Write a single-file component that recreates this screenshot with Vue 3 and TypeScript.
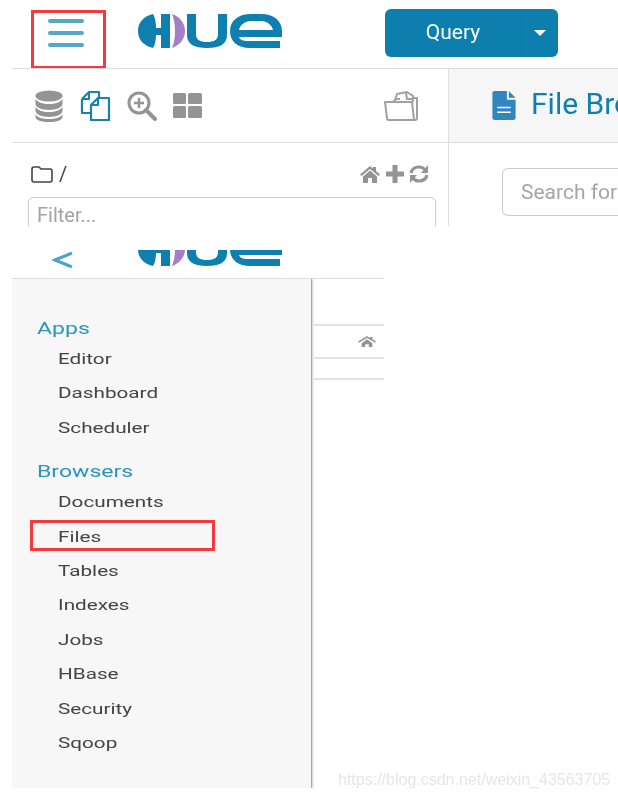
<script setup lang="ts">
const appsItems: string[] = ['Editor', 'Dashboard', 'Scheduler']
const browserItems: string[] = ['Documents', 'Files', 'Tables', 'Indexes', 'Jobs', 'HBase', 'Security', 'Sqoop']
</script>

<template>
  <div class="page">
    <section class="top">
      <header class="navbar">
        <div class="burger">
          <span></span><span></span><span></span>
        </div>
        <svg class="logo" width="146" height="36" viewBox="0 0 146 36">
          <path d="M15 1C6 3 0 9 0 18s6 15 15 17c2-3 3-8 3-13h5v13h9V1h-9v14h-5c0-5-1-11-3-14z" fill="#0e7fae" />
          <path d="M34 1c8 3 13 9 13 17s-5 14-13 17c2-5 3-10 3-17s-1-12-3-17z" fill="#a27fc6" />
          <path d="M49 1h9v20c0 6 4 8 11 8s11-2 11-8V1h9v21c0 9-7 13-20 13s-20-4-20-13z" fill="#0e7fae" />
          <path fill-rule="evenodd" d="M92 18C92 7 101 1 113 1h10c13 0 21 7 21 17v6H101c1 3 4 4 9 4h32v7h-30C99 35 92 28 92 18zm9-1h34c-1-5-6-9-12-9h-10c-6 0-11 4-12 9z" fill="#0e7fae" />
        </svg>
        <div class="query-btn">
          <span class="query-label">Query</span>
          <span class="query-caret"><i></i></span>
        </div>
      </header>
      <div class="panels">
        <aside class="left">
          <div class="assist-tabs">
            <svg class="t-db" width="28" height="32" viewBox="0 0 28 32" fill="#949494">
              <ellipse cx="14" cy="6" rx="13.500" ry="5.500" />
              <path d="M.5 9c2 3 7 5 13.500 5s11.500-2 13.500-5v5c0 3-6 6-13.500 6S.5 17 .5 14z" />
              <path d="M.5 17c2 3 7 5 13.500 5s11.500-2 13.500-5v4c0 3-6 6-13.500 6S.5 24 .5 21z" />
              <path d="M.5 24.500c2 3 7 4.500 13.500 4.500s11.500-1.500 13.500-4.500V27c0 3-6 5-13.500 5S.5 30 .5 27z" />
            </svg>
            <svg class="t-files" width="31" height="31" viewBox="0 0 31 31" fill="none" stroke="#1b80ad" stroke-width="2.200" stroke-linejoin="round">
              <path d="M2 9 9 2h10v7M2 9v14h8M2 9h7V2" />
              <path d="M11 15l7-7h11v22H11z" fill="#fff" />
              <path d="M11 15h7V8" />
            </svg>
            <svg class="t-search" width="30" height="30" viewBox="0 0 30 30" fill="none" stroke="#949494">
              <circle cx="12" cy="12" r="10" stroke-width="3" />
              <path d="M19 19l9 9" stroke-width="4" stroke-linecap="round" />
              <path d="M7 12h10M12 7v10" stroke-width="2.500" />
            </svg>
            <svg class="t-grid" width="29" height="25" viewBox="0 0 29 25" fill="#949494">
              <rect width="13" height="11" rx="1.500" />
              <rect x="15" width="14" height="11" rx="1.500" />
              <rect y="13" width="13" height="12" rx="1.500" />
              <rect x="15" y="13" width="14" height="12" rx="1.500" />
            </svg>
            <svg class="t-open" width="34" height="30" viewBox="0 0 34 30" fill="none" stroke="#a0a0a0" stroke-width="2" stroke-linejoin="round">
              <path d="M3 27 1 11h8l3-3h4" />
              <path d="M11 9 13 3l10-2 6 4v6" />
              <path d="M22 2l1 6h6" />
              <path d="M29 7h4v20c0 1-1 2-2 2H5c-1 0-2-1-2-2" />
              <path d="M1 11h27l2 18" />
            </svg>
          </div>
          <div class="assist-body">
            <div class="path-row">
              <svg class="i-folder" width="22" height="17" viewBox="0 0 22 17" fill="none" stroke="#444" stroke-width="1.600">
                <path d="M3 1h5l2 2h9c1 0 2 1 2 2v9c0 1-1 2-2 2H3c-1 0-2-1-2-2V3c0-1 1-2 2-2z" />
              </svg>
              <span class="slash">/</span>
              <span class="spacer"></span>
              <svg class="i-home" width="20" height="17" viewBox="0 0 20 17" fill="#949494">
                <path d="M10 0 0 8.500l1.500 1.500L10 3l8.500 7L20 8.500l-4-3.500V1h-3v1.500z" />
                <path d="M3 10.500 10 4.500l7 6V17h-5v-5H8v5H3z" />
              </svg>
              <svg class="i-plus" width="18" height="18" viewBox="0 0 18 18" fill="#949494">
                <path d="M6.500 0h5v6.500H18v5h-6.500V18h-5v-6.500H0v-5h6.500z" />
              </svg>
              <svg class="i-sync" width="20" height="20" viewBox="0 0 20 20" fill="none" stroke="#949494" stroke-width="3.200">
                <path d="M2 9c1-4 4-6 8-6 3 0 5 1 7 4" />
                <path d="M18 11c-1 4-4 6-8 6-3 0-5-1-7-4" />
                <path d="M19 1v8h-7zM1 19v-8h7z" fill="#949494" stroke="none" />
              </svg>
            </div>
            <div class="filter">Filter...</div>
          </div>
        </aside>
        <main class="right">
          <div class="title-bar">
            <svg class="doc-icon" width="24" height="29" viewBox="0 0 24 30">
              <path d="M2 0h13v9h9v19c0 1-1 2-2 2H2c-1 0-2-1-2-2V2C0 1 1 0 2 0zM17 0l7 7h-7z" fill="#3186c0" />
              <path d="M5 17h14M5 22h14" stroke="#fff" stroke-width="1.500" />
            </svg>
            <span class="title">File Browser</span>
          </div>
          <div class="search-wrap">
            <div class="search">Search for file name</div>
          </div>
        </main>
      </div>
    </section>

    <section class="bottom">
      <div class="nav2">
        <svg class="back" width="21" height="16" viewBox="0 0 21 16" fill="none" stroke="#4ba3c7" stroke-width="3">
          <path d="M20 1 3 8l17 7" />
        </svg>
        <div class="logo-crop">
          <svg class="logo" width="146" height="36" viewBox="0 0 146 36">
            <path d="M15 1C6 3 0 9 0 18s6 15 15 17c2-3 3-8 3-13h5v13h9V1h-9v14h-5c0-5-1-11-3-14z" fill="#0e7fae" />
            <path d="M34 1c8 3 13 9 13 17s-5 14-13 17c2-5 3-10 3-17s-1-12-3-17z" fill="#a27fc6" />
            <path d="M49 1h9v20c0 6 4 8 11 8s11-2 11-8V1h9v21c0 9-7 13-20 13s-20-4-20-13z" fill="#0e7fae" />
            <path fill-rule="evenodd" d="M92 18C92 7 101 1 113 1h10c13 0 21 7 21 17v6H101c1 3 4 4 9 4h32v7h-30C99 35 92 28 92 18zm9-1h34c-1-5-6-9-12-9h-10c-6 0-11 4-12 9z" fill="#0e7fae" />
          </svg>
        </div>
      </div>
      <div class="under">
        <nav class="sidebar">
          <h4 class="group first">Apps</h4>
          <div v-for="item in appsItems" :key="item" class="item"><span>{{ item }}</span></div>
          <h4 class="group second">Browsers</h4>
          <div v-for="item in browserItems" :key="item" class="item" :class="{ marked: item === 'Files' }"><span>{{ item }}</span></div>
        </nav>
        <div class="behind">
          <div class="behind-row">
            <svg width="18" height="11" viewBox="0 0 20 12" fill="#949494">
              <path d="M10 0 0 6l1 1.500 9-5.500 9 5.500L20 6l-4-2.500V1h-3v1z" />
              <path d="M4 8l6-4.500L16 8v4h-4V9H8v3H4z" />
            </svg>
          </div>
          <div class="behind-empty"></div>
          <div class="watermark">https://blog.csdn.net/weixin_43563705</div>
        </div>
      </div>
    </section>
  </div>
</template>

<style>
html, body { margin: 0; background: #fff; }
</style>

<style scoped>
.page {
  width: 618px;
  height: 798px;
  overflow: hidden;
  background: #fff;
  font-family: Roboto, "Liberation Sans", sans-serif;
  padding-left: 12px;
  box-sizing: border-box;
  filter: blur(0.4px);
}
.top { height: 226px; overflow: hidden; }
.navbar {
  height: 68px;
  border-bottom: 1px solid #dcdcdc;
  display: flex;
  align-items: flex-start;
}
.burger {
  margin: 10px 0 0 19px;
  width: 75px;
  height: 58px;
  box-sizing: border-box;
  border: 3px solid #f33a3f;
  border-bottom-width: 2px;
  padding: 6px 0 0 14px;
  display: flex;
  flex-direction: column;
  gap: 8px;
}
.burger span {
  display: block;
  width: 36px;
  height: 4px;
  border-radius: 2px;
  background: #56a7c9;
}
.logo { display: block; flex: none; }
.navbar > .logo { margin: 13px 0 0 32px; }
.query-btn {
  margin: 9px 0 0 101px;
  width: 173px;
  height: 48px;
  border-radius: 6px;
  background: #0d7fae;
  display: flex;
  color: #fff;
}
.query-label {
  width: 136px;
  border-right: 1px solid #2b6f95;
  text-align: center;
  line-height: 47px;
  font-size: 21px;
}
.query-caret { flex: 1; display: flex; align-items: center; justify-content: center; }
.query-caret i {
  width: 0;
  height: 0;
  border: 6px solid transparent;
  border-top-color: #fff;
  border-bottom-width: 0;
}
.panels { display: flex; height: 157px; }
.left { width: 436px; flex: none; border-right: 1px solid #dedede; }
.assist-tabs {
  height: 73px;
  border-bottom: 1px solid #dedede;
  display: flex;
  align-items: center;
  padding: 0 30px 0 23px;
}
.t-db { flex: none; }
.t-files { margin-left: 17px; flex: none; }
.t-search { margin-left: 16px; flex: none; }
.t-grid { margin-left: 16px; margin-top: -1px; flex: none; }
.t-open { margin-left: auto; flex: none; }
.assist-body { padding: 21px 0 0 16px; }
.path-row { display: flex; align-items: center; height: 20px; padding: 0 19px 0 3px; }
.i-folder, .i-home, .i-plus, .i-sync { flex: none; }
.slash { margin-left: 6px; font-size: 20px; color: #444; }
.spacer { flex: 1; }
.i-home { margin-right: -2px; transform: translateX(-3px); }
.i-plus { margin-left: 5px; }
.i-sync { margin-left: 5px; }
.filter {
  margin: 13px 0 0 0;
  width: 408px;
  height: 40px;
  box-sizing: border-box;
  border: 1px solid #ccc;
  border-radius: 5px;
  padding: 3px 8px;
  font-size: 20px;
  line-height: 28px;
  color: #a2a2a2;
}
.right { flex: 1; min-width: 0; overflow: hidden; }
.title-bar {
  height: 73px;
  background: #f6f6f6;
  border-bottom: 1px solid #dedede;
  display: flex;
  align-items: center;
  padding-left: 43px;
  white-space: nowrap;
}
.doc-icon { flex: none; }
.title { margin: -4px 0 0 15px; font-size: 30px; color: #0f7fae; }
.search-wrap { padding: 25px 0 0 53px; }
.search {
  width: 200px;
  height: 48px;
  box-sizing: border-box;
  border: 1px solid #ccc;
  border-right: 0;
  border-radius: 6px 0 0 6px;
  padding-left: 18px;
  font-size: 21px;
  line-height: 46px;
  color: #a5a5a5;
  white-space: nowrap;
}
.bottom { height: 572px; }
.nav2 {
  height: 52px;
  width: 372px;
  border-bottom: 1px solid #dcdcdc;
  display: flex;
  align-items: flex-start;
  overflow: hidden;
}
.back { margin: 26px 0 0 40px; flex: none; }
.logo-crop { margin: 24px 0 0 65px; height: 17px; overflow: hidden; width: 146px; flex: none; }
.logo-crop .logo { margin-top: -19px; }
.under { display: flex; align-items: flex-start; }
.sidebar {
  width: 300px;
  height: 509px;
  box-sizing: border-box;
  background: #f7f7f7;
  border-right: 1px solid #a8a8a8;
  box-shadow: 1px 0 2px rgba(0, 0, 0, 0.2);
  clip-path: inset(0 -4px 0 0);
  padding: 40px 0 0 25px;
}
.group {
  margin: 0;
  font-size: 16px;
  font-weight: 400;
  line-height: 20px;
  color: #2b93c0;
  transform: scaleX(1.44);
  transform-origin: left center;
  white-space: nowrap;
}
.group.first { margin-bottom: 6px; }
.group.second { margin-top: 14px; margin-bottom: 6px; }
.item {
  height: 34.400px;
  line-height: 29px;
  padding-left: 21px;
  font-size: 15px;
  color: #444;
  position: relative;
}
.item span {
  display: inline-block;
  transform: scaleX(1.38);
  transform-origin: left center;
  white-space: nowrap;
}
.item.marked::after {
  content: "";
  position: absolute;
  left: -7px;
  top: -3px;
  width: 185px;
  height: 31px;
  box-sizing: border-box;
  border: 3px solid #f33a3f;
}
.behind { width: 72px; position: relative; }
.behind-row {
  margin-top: 45px;
  height: 31px;
  border-top: 2px solid #e4e4e4;
  border-bottom: 2px solid #e4e4e4;
  display: flex;
  align-items: center;
  justify-content: flex-end;
  padding-right: 8px;
  width: 64px;
}
.behind-empty { height: 19px; border-bottom: 2px solid #e4e4e4; }
.watermark {
  position: absolute;
  left: 26px;
  top: 492px;
  font-family: "Liberation Sans", sans-serif;
  font-size: 16px;
  color: #e6e6e6;
  white-space: nowrap;
}
</style>
